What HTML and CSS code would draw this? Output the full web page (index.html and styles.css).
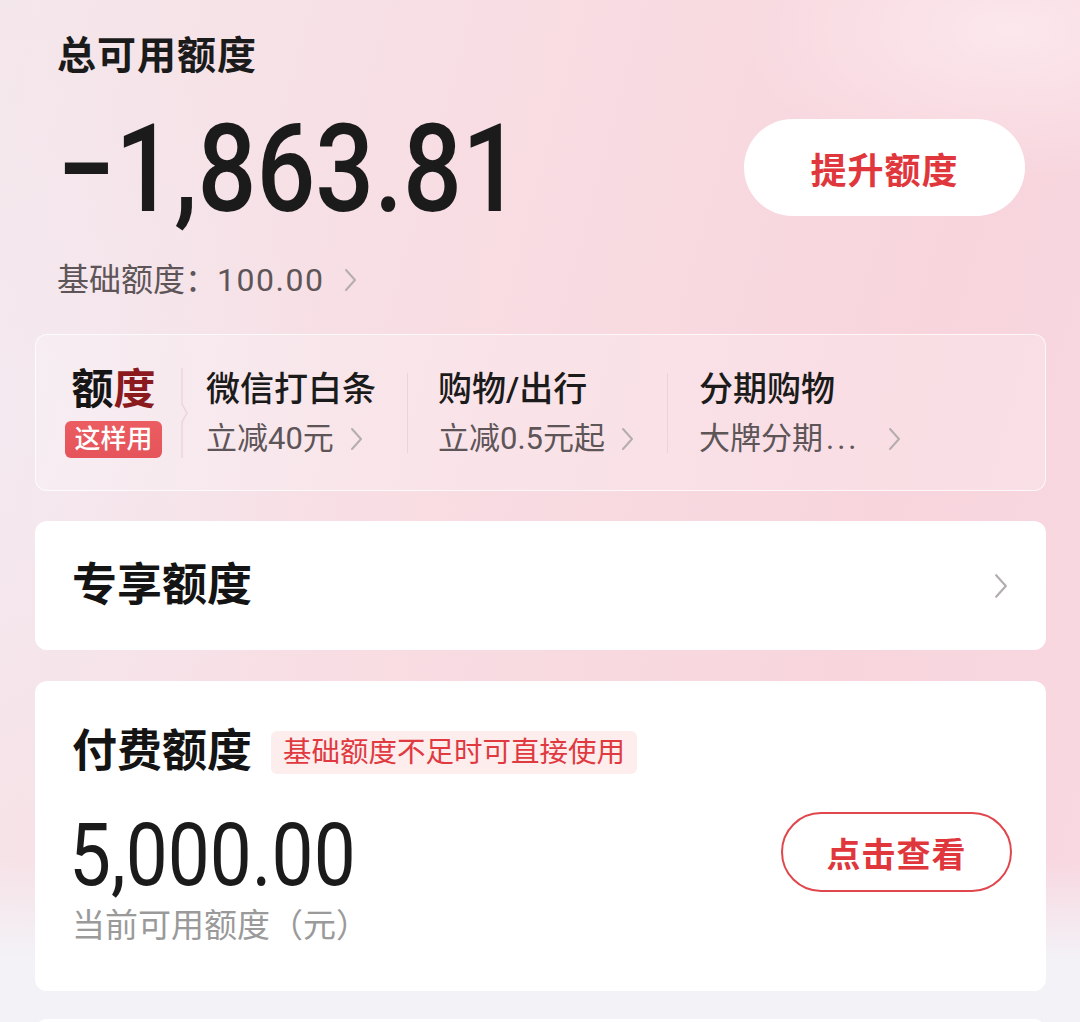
FILE: index.html
```html
<!DOCTYPE html>
<html lang="zh-CN">
<head>
<meta charset="utf-8">
<title>额度</title>
<link rel="stylesheet" href="styles.css">
</head>
<body>
<div class="screen">
  <section class="hero">
    <div class="hero-main">
      <h1 class="hero-title">总可用额度</h1>
      <div class="hero-amount"><span class="squeeze">−1,863.81</span></div>
      <div class="hero-base">
        <span>基础额度：<span class="base-num">100.00</span></span>
        <svg class="chev chev-base" viewBox="0 0 13 24"><polyline points="2,2 11,12 2,22"/></svg>
      </div>
    </div>
    <button class="btn-raise">提升额度</button>
  </section>

  <section class="strip">
    <div class="strip-logo">
      <div class="logo-word">额<span class="logo-dark">度</span></div>
      <div class="logo-badge">这样用</div>
    </div>
    <svg class="notch" viewBox="0 0 8 90"><polyline points="1,0 1,36 6,45 1,54 1,90"/></svg>
    <div class="strip-col col-1">
      <div class="col-title">微信打白条</div>
      <div class="col-sub">立减40元<svg class="chev chev-sub" viewBox="0 0 13 24"><polyline points="2,2 11,12 2,22"/></svg></div>
    </div>
    <div class="vline"></div>
    <div class="strip-col col-2">
      <div class="col-title">购物/出行</div>
      <div class="col-sub">立减0.5元起<svg class="chev chev-sub" viewBox="0 0 13 24"><polyline points="2,2 11,12 2,22"/></svg></div>
    </div>
    <div class="vline"></div>
    <div class="strip-col col-3">
      <div class="col-title">分期购物</div>
      <div class="col-sub">大牌分期<span class="dots">...</span><svg class="chev chev-sub chev-far" viewBox="0 0 13 24"><polyline points="2,2 11,12 2,22"/></svg></div>
    </div>
  </section>

  <section class="card card-exclusive">
    <h2 class="card-title">专享额度</h2>
    <svg class="chev chev-card" viewBox="0 0 13 24"><polyline points="2,2 11,12 2,22"/></svg>
  </section>

  <section class="card card-paid">
    <div class="paid-head">
      <h2 class="card-title">付费额度</h2>
      <span class="paid-tag">基础额度不足时可直接使用</span>
    </div>
    <div class="paid-body">
      <div class="paid-info">
        <div class="paid-amount"><span class="squeeze">5,000.00</span></div>
        <div class="paid-label">当前可用额度（元）</div>
      </div>
      <button class="btn-view">点击查看</button>
    </div>
  </section>

  <section class="card card-next"></section>
</div>
</body>
</html>
```

FILE: styles.css
```css
* { box-sizing: border-box; }
html, body { margin: 0; padding: 0; }
body {
  width: 1080px;
  height: 1022px;
  overflow: hidden;
  font-family: Roboto, "Noto Sans CJK SC", sans-serif;
  color: #1b1b1b;
  background:
    radial-gradient(ellipse 360px 200px at 1010px 30px, rgba(255,255,255,0.45), rgba(255,255,255,0) 75%),
    radial-gradient(ellipse 420px 520px at 0px 420px, rgba(243,236,244,0.6), rgba(243,236,244,0) 80%),
    linear-gradient(180deg, rgba(243,242,247,0) 0px, rgba(243,242,247,0) 860px, #f3f2f7 960px),
    linear-gradient(105deg, #f4e7eb 0%, #f8dde3 40%, #f8d5dd 75%, #f8d8e1 100%);
}
.screen {
  height: 1022px;
  overflow: hidden;
  padding: 0 34px 0 35px;
}

/* hero */
.hero {
  display: flex;
  justify-content: space-between;
  align-items: flex-start;
  padding: 30px 21px 0 22px;
}
.hero-title {
  margin: 0;
  font-size: 39px;
  line-height: 52px;
  font-weight: 600;
  letter-spacing: 1px;
}
.hero-amount {
  margin-top: 28px;
  font-size: 122px;
  line-height: 120px;
  font-weight: 500;
  white-space: nowrap;
  height: 120px;
}
.squeeze {
  display: inline-block;
  transform: scaleX(0.85);
  transform-origin: left center;
}
.hero-base {
  margin-top: 30px;
  display: flex;
  align-items: center;
  font-size: 32px;
  line-height: 40px;
  color: #5e5558;
}
.base-num { letter-spacing: 1.5px; }
.chev {
  fill: none;
  stroke: #b4adb0;
  stroke-width: 2;
  stroke-linecap: round;
  stroke-linejoin: round;
}
.chev-base { width: 13px; height: 24px; margin-left: 20px; }
.btn-raise {
  margin-top: 89px;
  width: 281px;
  height: 97px;
  border: 0;
  border-radius: 49px;
  background: #fff;
  color: #e0373d;
  font-family: Roboto, "Noto Sans CJK SC", sans-serif;
  font-size: 36px;
  font-weight: 600;
  letter-spacing: 1px;
}

/* strip */
.strip {
  margin-top: 34px;
  height: 157px;
  border: 1px solid rgba(255,255,255,0.75);
  border-radius: 12px;
  background: rgba(255,255,255,0.22);
  display: flex;
  align-items: center;
}
.strip-logo {
  margin-left: 29px;
  width: 97px;
  display: flex;
  flex-direction: column;
  align-items: center;
}
.logo-word {
  font-size: 42px;
  line-height: 46px;
  font-weight: 700;
  color: #151515;
}
.logo-dark { color: #8a1a1e; }
.logo-badge {
  margin-top: 8px;
  width: 97px;
  height: 37px;
  border-radius: 6px;
  background: linear-gradient(180deg, #ec5d62, #e4545a);
  color: #fff;
  font-size: 26px;
  line-height: 37px;
  text-align: center;
  font-weight: 500;
}
.notch {
  width: 8px;
  height: 90px;
  margin-left: 19px;
  fill: none;
  stroke: #eed3da;
  stroke-width: 1.5;
}
.strip-col { display: flex; flex-direction: column; }
.col-1 { width: 218px; padding-left: 17px; }
.col-2 { width: 259px; padding-left: 30px; }
.col-3 { padding-left: 31px; }
.vline {
  width: 1px;
  height: 80px;
  background: #ecd4da;
}
.col-title {
  font-size: 34px;
  line-height: 44px;
  font-weight: 500;
  color: #1b1b1b;
}
.col-sub {
  margin-top: 8px;
  display: flex;
  align-items: center;
  font-size: 31px;
  line-height: 40px;
  color: #5e5558;
}
.dots { letter-spacing: 3px; margin-left: 3px; }
.chev-sub { width: 13px; height: 24px; margin-left: 16px; }
.chev-far { margin-left: 28px; }

/* cards */
.card {
  background: #fff;
  border-radius: 12px;
}
.card-exclusive {
  margin-top: 30px;
  height: 129px;
  display: flex;
  align-items: center;
  justify-content: space-between;
  padding: 0 38px 0 37px;
}
.card-title {
  margin: 0;
  font-size: 45px;
  line-height: 56px;
  font-weight: 600;
  color: #141414;
}
.chev-card { width: 14px; height: 26px; }

.card-paid {
  margin-top: 31px;
  height: 310px;
  padding: 43px 34px 0 37px;
}
.paid-head {
  display: flex;
  align-items: center;
}
.paid-tag {
  margin-left: 19px;
  height: 43px;
  padding: 0 12px;
  border-radius: 6px;
  background: #fdeded;
  color: #e0393f;
  font-size: 28.5px;
  line-height: 43px;
}
.paid-body {
  margin-top: 30px;
  display: flex;
  justify-content: space-between;
  align-items: flex-start;
}
.paid-amount {
  margin-left: -3px;
  font-size: 88px;
  line-height: 90px;
  height: 90px;
  font-weight: 400;
  white-space: nowrap;
}
.paid-label {
  margin-top: 6px;
  font-size: 33px;
  line-height: 40px;
  color: #9a9a9a;
}
.btn-view {
  margin-top: 2px;
  width: 231px;
  height: 80px;
  border: 2px solid #e0474c;
  border-radius: 40px;
  background: #fff;
  color: #e0373d;
  font-family: Roboto, "Noto Sans CJK SC", sans-serif;
  font-size: 34px;
  font-weight: 600;
  letter-spacing: 1px;
}
.card-next {
  margin-top: 28px;
  height: 200px;
}
```
